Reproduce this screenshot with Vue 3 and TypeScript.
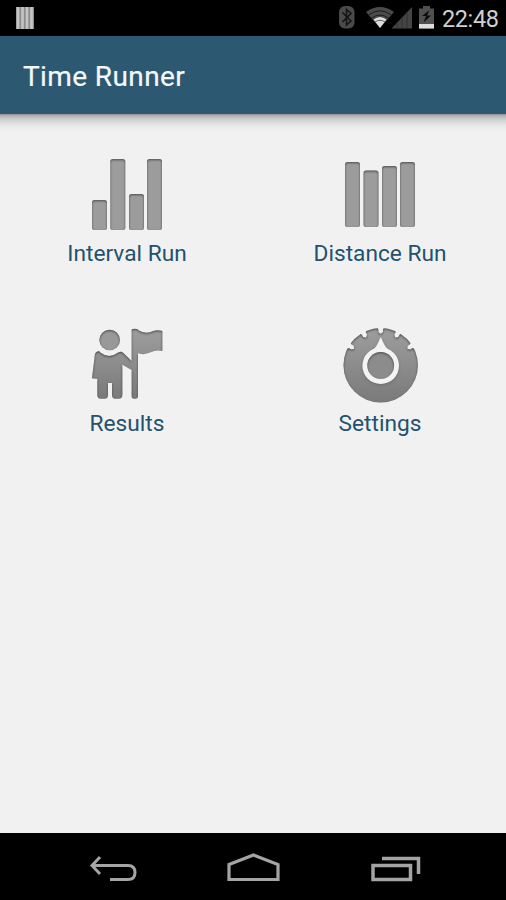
<script setup lang="ts">
type IconName = 'interval' | 'distance' | 'results' | 'settings'

interface Bar {
  x: number
  y: number
  h: number
}

interface Tile {
  icon: IconName
  label: string
}

const tiles: Tile[] = [
  { icon: 'interval', label: 'Interval Run' },
  { icon: 'distance', label: 'Distance Run' },
  { icon: 'results', label: 'Results' },
  { icon: 'settings', label: 'Settings' },
]

const bars: Record<'interval' | 'distance', Bar[]> = {
  interval: [
    { x: 5, y: 45, h: 30 },
    { x: 23.3, y: 4, h: 71 },
    { x: 42, y: 39, h: 36 },
    { x: 60, y: 4, h: 71 },
  ],
  distance: [
    { x: 5, y: 7, h: 65 },
    { x: 23.5, y: 15.5, h: 56.5 },
    { x: 42, y: 11, h: 61 },
    { x: 60, y: 7, h: 65 },
  ],
}

const notches: number[] = [-58, -28, 0, 28, 58]
</script>

<template>
  <div class="screen">
    <header class="status">
      <svg class="notice" width="18" height="22" viewBox="0 0 18 22">
        <rect width="18" height="22" fill="#8c8c8c" />
        <path d="M2 0V22M6.5 0V22M11 0V22M15.5 0V22" stroke="#c4c4c4" stroke-width="2.7" />
      </svg>
      <svg class="signals" width="100" height="36" viewBox="336 0 100 36">
        <rect x="339" y="6" width="15.5" height="22.5" rx="6" fill="#4a4a4a" />
        <path d="M342.500 12.500L351 21L346.500 25V9.500L351 13.500L342.500 22" fill="none" stroke="#141414" stroke-width="1.6" />
        <path d="M366 12Q380 2 394 12L380 28Z" fill="#4a4a4a" />
        <path d="M373.500 19.500Q380 14.500 386.500 19.500L380 28Z" fill="#ddd" />
        <path d="M368.500 15Q380 6.500 391.500 15M371 18.500Q380 11.500 389 18.500" fill="none" stroke="#1a1a1a" stroke-width="1" />
        <path d="M375 22Q380 18.500 385 22" fill="none" stroke="#666" stroke-width="1" />
        <path d="M391.500 28.500L412 7V28.500Z" fill="#444" />
        <path d="M397 22V28.500M402 17V28.500M407 12V28.500" stroke="#303030" stroke-width="1" />
        <path d="M419 8.500H423V6H430V8.500H434V28.500H419Z" fill="#505050" />
        <rect x="419" y="24" width="15" height="4.500" fill="#ddd" />
        <path d="M429.500 10L422 16H426L423.500 22.500L431 15.500H427Z" fill="#0c0c0c" />
      </svg>
      <span class="clock">22:48</span>
    </header>

    <div class="toolbar"><h1>Time Runner</h1></div>

    <main class="content">
      <div class="grid">
        <button v-for="tile in tiles" :key="tile.icon" class="tile" type="button">
          <svg class="icon" width="80" height="80" viewBox="0 0 80 80">
            <defs>
              <linearGradient :id="`fill-${tile.icon}`" x1="0" y1="0" x2="0" y2="1">
                <stop offset="0" stop-color="#9e9e9e" />
                <stop offset="1" stop-color="#7a7a7a" />
              </linearGradient>
              <filter :id="`inset-${tile.icon}`" x="-10%" y="-10%" width="120%" height="120%" color-interpolation-filters="sRGB">
                <feGaussianBlur in="SourceAlpha" stdDeviation="1.1" result="soft" />
                <feOffset in="soft" dx=".3" dy=".5" result="moved" />
                <feComposite in="SourceAlpha" in2="moved" operator="out" result="edge" />
                <feFlood flood-color="#383838" flood-opacity=".8" />
                <feComposite in2="edge" operator="in" result="shade" />
                <feMerge>
                  <feMergeNode in="SourceGraphic" />
                  <feMergeNode in="shade" />
                </feMerge>
              </filter>
            </defs>
            <g :filter="`url(#inset-${tile.icon})`">
              <template v-if="tile.icon === 'interval' || tile.icon === 'distance'">
                <rect
                  v-for="bar in bars[tile.icon]"
                  :key="bar.x"
                  :x="bar.x"
                  :y="bar.y"
                  width="15"
                  :height="bar.h"
                  rx="2.6"
                  fill="#9c9c9c"
                />
              </template>
              <g v-else-if="tile.icon === 'results'" transform="translate(-27 -10) scale(.33333)">
                <circle cx="149" cy="75" r="31" fill="#999" />
                <path
                  fill="url(#fill-results)"
                  d="M114 109Q118 108 122 113Q148 133 176 112Q184 107 190 114L215 138V43Q224 40 234 43V45Q253 57 272 51Q288 43 307 48V108Q288 103 272 112Q252 121 234 115V243Q234 251 226 251H222Q215 251 215 243V165L187 149V240Q187 251 176 251H166Q156 251 156 240V204H144V240Q144 251 134 251H122Q112 251 112 240V192L96 190L105 117Q107 111 114 109Z"
                />
              </g>
              <template v-else>
                <mask id="dial-cut">
                  <rect width="80" height="80" fill="#fff" />
                  <path
                    v-for="angle in notches"
                    :key="angle"
                    d="M36.500 1H44.900L43 4.500V7L40.700 9L38.400 7V4.500Z"
                    fill="#000"
                    :transform="`rotate(${angle} 40.700 40.300)`"
                  />
                </mask>
                <circle cx="40.700" cy="40.300" r="37.200" fill="url(#fill-settings)" mask="url(#dial-cut)" />
              </template>
            </g>
            <g v-if="tile.icon === 'settings'">
              <g class="pointer" fill="#f3f3f3">
                <circle cx="40.700" cy="40.700" r="18.300" />
                <path d="M40.700 12.500C42.500 13.500 43.500 23 52.500 28H29C38 23 39 13.500 40.700 12.500Z" />
              </g>
              <circle cx="40.700" cy="40.500" r="13.400" fill="#8c8c8c" filter="url(#inset-settings)" />
            </g>
          </svg>
          <span class="label">{{ tile.label }}</span>
        </button>
      </div>
    </main>

    <nav class="navbar">
      <svg width="506" height="67" viewBox="0 833 506 67" fill="none" stroke="#a4a4a4">
        <path d="M100 857L92 865.500L100 874M92 865.500H128Q135 865.500 135 872.500Q135 879.500 128 879.500H110" stroke-width="3" />
        <path d="M229 864.500L253.500 855L278 864.500V879.500H229Z" stroke-width="3.200" />
        <path d="M373 865.500H410.500V879.500H373ZM382 858.500H418.500V874" stroke-width="3.500" />
      </svg>
    </nav>
  </div>
</template>

<style>
body {
  margin: 0;
}
</style>

<style scoped>
.screen {
  display: flex;
  flex-direction: column;
  width: 506px;
  height: 900px;
  overflow: hidden;
  background: #f1f1f1;
  font-family: Roboto, sans-serif;
}

.status {
  display: flex;
  flex: 0 0 36px;
  align-items: center;
  background: #000;
}

.notice {
  margin-left: 16px;
}

.signals {
  margin-left: auto;
}

.clock {
  width: 57px;
  margin: 2px 7px 0 6px;
  color: #d0d0d0;
  font-size: 23.5px;
  line-height: 28px;
  white-space: nowrap;
  letter-spacing: -0.4px;
}

.toolbar {
  display: flex;
  flex: 0 0 78px;
  align-items: center;
  padding-left: 23px;
  background: #2c5871;
}

h1 {
  margin: 4px 0 0;
  color: #f5f8fa;
  font-size: 28px;
  font-weight: 400;
  line-height: 36px;
  letter-spacing: 0.4px;
  -webkit-text-stroke: 0.2px #f5f8fa;
}

.content {
  flex: 1;
  background: linear-gradient(#8d9296 0, #b5b5b5 2px, #d2d2d2 6px, #e9e9e9 12px, #f1f1f1 18px);
}

.grid {
  display: grid;
  grid-template-columns: 1fr 1fr;
  grid-auto-rows: 170px;
}

.tile {
  display: flex;
  flex-direction: column;
  align-items: center;
  padding: 41px 0 0;
  border: 0;
  background: none;
  font-family: inherit;
}

.icon {
  display: block;
}

.pointer {
  filter: drop-shadow(0 1px 1.5px #5558);
}

.label {
  margin: 5px 0 0 1px;
  color: #23516f;
  font-size: 22.7px;
  line-height: 28px;
  white-space: nowrap;
  letter-spacing: 0;
}

.navbar {
  flex: 0 0 67px;
  background: #000;
}

.navbar svg {
  display: block;
}
</style>
